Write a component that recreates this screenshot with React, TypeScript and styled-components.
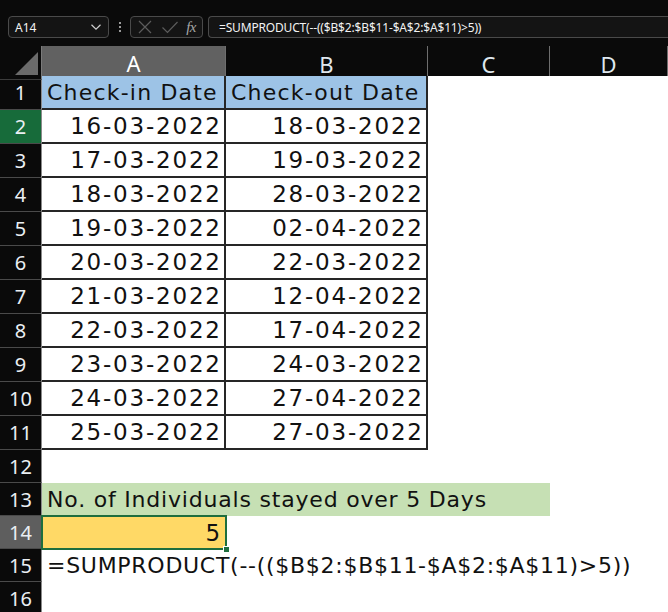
import React from "react";
import styled, { createGlobalStyle } from "styled-components";

const Global = createGlobalStyle`
  html, body { margin: 0; padding: 0; background: #0a0a0a; }
  body { width: 668px; height: 612px; overflow: hidden; }
`;

const Page = styled.div`
  width: 668px;
  height: 612px;
  background: #0a0a0a;
  display: flex;
  flex-direction: column;
  overflow: hidden;
  font-family: "Noto Sans", "DejaVu Sans", sans-serif;
`;

/* ---------- formula bar ---------- */

const Toolbar = styled.div`
  flex-shrink: 0;
  height: 46px;
  box-sizing: border-box;
  padding: 16px 0 8px 8px;
  display: flex;
  align-items: stretch;
`;

const NameBox = styled.div`
  width: 101px;
  box-sizing: border-box;
  border: 1px solid #4a4a4a;
  border-radius: 4px;
  background: #141414;
  display: flex;
  align-items: center;
  justify-content: space-between;
  padding: 0 6px 0 6px;
  color: #f2f2f2;
  font-size: 12px;
`;

const Divider = styled.div`
  width: 21px;
  display: flex;
  flex-direction: column;
  align-items: center;
  justify-content: center;
  gap: 2px;
  & > span {
    width: 2px;
    height: 2px;
    background: #9a9a9a;
  }
`;

const EditBox = styled.div`
  width: 73px;
  box-sizing: border-box;
  border: 1px solid #4a4a4a;
  border-radius: 4px;
  background: #141414;
  display: flex;
  align-items: center;
  justify-content: space-between;
  padding: 0 4px 0 6px;
`;

const FxLabel = styled.span`
  font-family: "Liberation Serif", "DejaVu Serif", serif;
  font-style: italic;
  font-size: 15px;
  color: #a6a6a6;
  letter-spacing: -0.5px;
  padding-right: 2px;
`;

const FormulaInput = styled.div`
  flex: 1;
  margin-left: 5px;
  box-sizing: border-box;
  border: 1px solid #4a4a4a;
  border-right: none;
  border-radius: 4px 0 0 4px;
  background: #141414;
  display: flex;
  align-items: center;
  padding-left: 10px;
  color: #f2f2f2;
  font-size: 12px;
  letter-spacing: -0.17px;
  white-space: nowrap;
`;

/* ---------- sheet grid ---------- */

const Sheet = styled.div`
  flex-shrink: 0;
  display: flex;
  flex-direction: column;
`;

const Row = styled.div<{ $h: number }>`
  flex-shrink: 0;
  display: grid;
  grid-template-columns: 42px 184px 202px 122px 118px;
  height: ${(p) => p.$h}px;
`;

const Corner = styled.div`
  position: relative;
  background: #0a0a0a;
  border-bottom: 1px solid #3c3c3c;
  border-right: 1px solid #7a7a7a;
  box-sizing: border-box;
  &::after {
    content: "";
    position: absolute;
    right: 3px;
    bottom: 4px;
    width: 0;
    height: 0;
    border-left: 23px solid transparent;
    border-bottom: 23px solid #6b6b6b;
  }
`;

const ColHead = styled.div<{ $active?: boolean }>`
  box-sizing: border-box;
  display: flex;
  align-items: center;
  justify-content: center;
  font-size: 22px;
  color: ${(p) => (p.$active ? "#ffffff" : "#dfe7ee")};
  background: ${(p) => (p.$active ? "#616161" : "#0a0a0a")};
  border-right: 1px solid #6e6e6e;
  border-bottom: ${(p) => (p.$active ? "2px solid #1f7a45" : "1px solid #3c3c3c")};
  padding-top: 2px;
`;

type HeadTone = "plain" | "green" | "grey";

const RowHead = styled.div<{ $tone: HeadTone }>`
  box-sizing: border-box;
  display: flex;
  align-items: center;
  justify-content: center;
  font-size: 20px;
  color: #eaeff3;
  background: ${(p) =>
    p.$tone === "green" ? "#176b3a" : p.$tone === "grey" ? "#5e5e5e" : "#0a0a0a"};
  border-right: 1px solid #8a8a8a;
  border-bottom: 1px solid #4a4a4a;
`;

type CellTone = "white" | "blue" | "green" | "yellow";

const toneBg: Record<CellTone, string> = {
  white: "#ffffff",
  blue: "#9dc3e6",
  green: "#c6e0b4",
  yellow: "#ffd966",
};

const Cell = styled.div<{
  $tone?: CellTone;
  $align?: "left" | "right";
  $boxed?: boolean;
  $span?: number;
}>`
  position: relative;
  box-sizing: border-box;
  grid-column: span ${(p) => p.$span ?? 1};
  background: ${(p) => toneBg[p.$tone ?? "white"]};
  display: flex;
  align-items: center;
  justify-content: ${(p) => (p.$align === "right" ? "flex-end" : "flex-start")};
  padding: 0 4px 0 5px;
  font-family: "DejaVu Sans", sans-serif;
  font-size: 22px;
  letter-spacing: 0.8px;
  color: #111111;
  white-space: nowrap;
  overflow: visible;
  ${(p) => (p.$boxed ? "border-right: 2px solid #262626; border-bottom: 2px solid #262626;" : "")}
`;

const HeaderText = styled.span`
  letter-spacing: 1.2px;
`;

const DateText = styled.span`
  font-size: 23px;
  letter-spacing: 1.8px;
  margin-right: -1.8px;
`;

const ResultText = styled.span`
  font-size: 23px;
  margin-right: 1px;
`;

/* active-cell outline with the fill handle in its corner */
const Selection = styled.div`
  position: absolute;
  z-index: 2;
  inset: -1px -1px -1px -1px;
  border: 2px solid #1e6e3e;
  pointer-events: none;
  &::after {
    content: "";
    position: absolute;
    right: -5px;
    bottom: -5px;
    width: 5px;
    height: 5px;
    background: #1e6e3e;
    border: 1px solid #ffffff;
  }
`;

const Overflow = styled.span`
  position: relative;
  z-index: 1;
  letter-spacing: 0.72px;
`;

const stays: [string, string][] = [
  ["16-03-2022", "18-03-2022"],
  ["17-03-2022", "19-03-2022"],
  ["18-03-2022", "28-03-2022"],
  ["19-03-2022", "02-04-2022"],
  ["20-03-2022", "22-03-2022"],
  ["21-03-2022", "12-04-2022"],
  ["22-03-2022", "17-04-2022"],
  ["23-03-2022", "24-03-2022"],
  ["24-03-2022", "27-04-2022"],
  ["25-03-2022", "27-03-2022"],
];

const FORMULA = "=SUMPRODUCT(--(($B$2:$B$11-$A$2:$A$11)>5))";

export default function App() {
  return (
    <Page>
      <Global />
      <Toolbar>
        <NameBox>
          <span>A14</span>
          <svg width="12" height="8" viewBox="0 0 12 8">
            <path d="M1.5 1.8 L6 6.2 L10.5 1.8" fill="none" stroke="#cfcfcf" strokeWidth="1.2" />
          </svg>
        </NameBox>
        <Divider>
          <span />
          <span />
          <span />
        </Divider>
        <EditBox>
          <svg width="16" height="16" viewBox="0 0 16 16">
            <path d="M2 2 L14 14 M14 2 L2 14" stroke="#5c5c5c" strokeWidth="1.2" />
          </svg>
          <svg width="18" height="16" viewBox="0 0 18 16">
            <path d="M1.5 8.5 L6.5 13.5 L16.5 3" fill="none" stroke="#5c5c5c" strokeWidth="1.2" />
          </svg>
          <FxLabel>fx</FxLabel>
        </EditBox>
        <FormulaInput>{FORMULA}</FormulaInput>
      </Toolbar>

      <Sheet>
        <Row $h={30}>
          <Corner />
          <ColHead $active>A</ColHead>
          <ColHead>B</ColHead>
          <ColHead>C</ColHead>
          <ColHead>D</ColHead>
        </Row>

        <Row $h={34}>
          <RowHead $tone="plain">1</RowHead>
          <Cell $tone="blue" $boxed>
            <HeaderText>Check-in Date</HeaderText>
          </Cell>
          <Cell $tone="blue" $boxed>
            <HeaderText>Check-out Date</HeaderText>
          </Cell>
          <Cell />
          <Cell />
        </Row>

        {stays.map(([checkIn, checkOut], i) => (
          <Row $h={34} key={checkIn}>
            <RowHead $tone={i === 0 ? "green" : "plain"}>{i + 2}</RowHead>
            <Cell $boxed $align="right">
              <DateText>{checkIn}</DateText>
            </Cell>
            <Cell $boxed $align="right">
              <DateText>{checkOut}</DateText>
            </Cell>
            <Cell />
            <Cell />
          </Row>
        ))}

        <Row $h={33}>
          <RowHead $tone="plain">12</RowHead>
          <Cell />
          <Cell />
          <Cell />
          <Cell />
        </Row>

        <Row $h={33}>
          <RowHead $tone="plain">13</RowHead>
          <Cell $tone="green" $span={3}>No. of Individuals stayed over 5 Days</Cell>
          <Cell />
        </Row>

        <Row $h={33}>
          <RowHead $tone="grey">14</RowHead>
          <Cell $tone="yellow" $align="right">
            <ResultText>5</ResultText>
            <Selection />
          </Cell>
          <Cell />
          <Cell />
          <Cell />
        </Row>

        <Row $h={33}>
          <RowHead $tone="plain">15</RowHead>
          <Cell $span={4}>
            <Overflow>{FORMULA}</Overflow>
          </Cell>
        </Row>

        <Row $h={33}>
          <RowHead $tone="plain">16</RowHead>
          <Cell />
          <Cell />
          <Cell />
          <Cell />
        </Row>
      </Sheet>
    </Page>
  );
}
